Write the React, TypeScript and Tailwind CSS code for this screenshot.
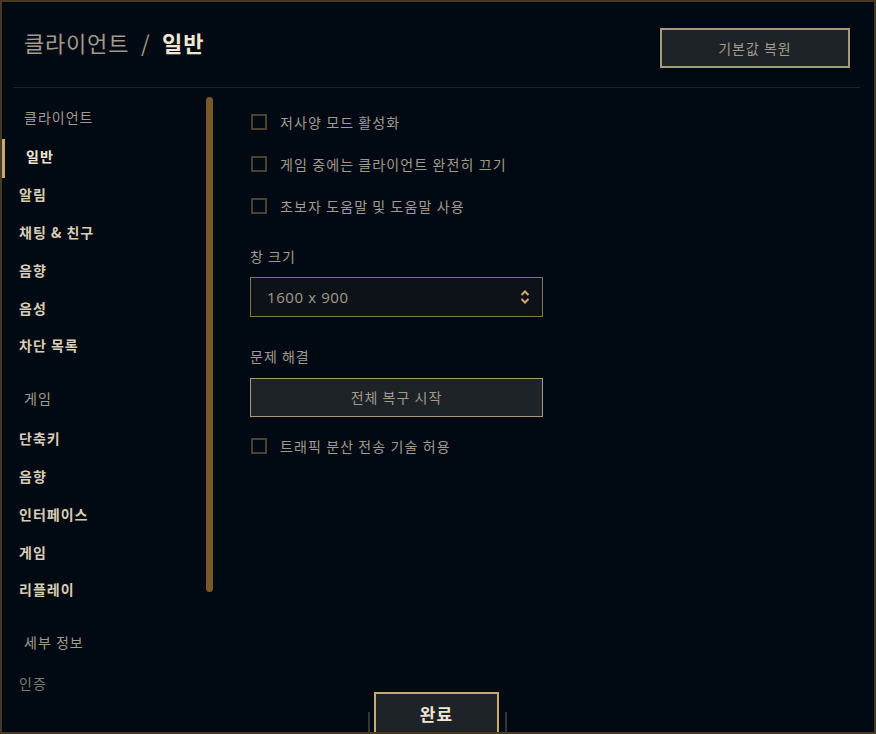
import { useState } from "react";

const font = { fontFamily: '"Noto Sans CJK KR", "Noto Sans", sans-serif' };

interface NavSection {
  title: string;
  items: string[];
}

const sections: NavSection[] = [
  { title: "클라이언트", items: ["일반", "알림", "채팅 & 친구", "음향", "음성", "차단 목록"] },
  { title: "게임", items: ["단축키", "음향", "인터페이스", "게임", "리플레이"] },
  { title: "세부 정보", items: ["인증"] },
];

function Checkbox({ label, checked, onToggle }: { label: string; checked: boolean; onToggle: () => void }) {
  return (
    <button onClick={onToggle} className="flex items-center h-[20px] gap-[13px] text-left">
      <span className="w-[16px] h-[16px] ml-px border-2 border-[#4a4132] flex items-center justify-center">
        {checked && <span className="w-[8px] h-[8px] bg-[#c8aa6e]" />}
      </span>
      <span className="text-[14px] text-[#a09b8c] tracking-[1.1px]">{label}</span>
    </button>
  );
}

export default function App() {
  const [active, setActive] = useState("클라이언트-일반");
  const [checks, setChecks] = useState<Record<string, boolean>>({});

  const toggle = (key: string) => setChecks((prev) => ({ ...prev, [key]: !prev[key] }));

  return (
    <div style={font} className="relative w-[876px] h-[734px] bg-[#010a13] border-2 border-[#463b22] overflow-hidden flex flex-col tracking-[1px]">
      {/* header */}
      <div className="h-[85px] flex items-start justify-between pl-[22px] pr-[24px]">
        <h1 className="mt-[24px] text-[22px] leading-[33px] text-[#a09b8c] tracking-[0.8px]">
          클라이언트 <span className="mx-[6px]">/</span> <span className="font-bold text-[#f0e6d2]">일반</span>
        </h1>
        <button className="mt-[26px] w-[190px] h-[40px] bg-[#1e2328] border-2 border-[#a8997a] text-[14px] text-[#a09b8c]">
          기본값 복원
        </button>
      </div>
      <div className="h-px bg-[#1e2328] ml-[11px] mr-[14px]" />

      <div className="flex flex-1">
        {/* sidebar */}
        <div className="w-[204px] pt-[8px]">
          {sections.map((section, si) => (
            <div key={section.title} className={si > 0 ? "mt-[13px]" : ""}>
              <div className="h-[42px] flex items-center pl-[22px] text-[14px] text-[#a09b8c]">{section.title}</div>
              {section.items.map((item) => {
                const key = `${section.title}-${item}`;
                const isActive = active === key;
                const dim = section.title === "세부 정보";
                return (
                  <button
                    key={key}
                    onClick={() => setActive(key)}
                    className="relative w-full h-[37.8px] flex items-center text-left"
                  >
                    {isActive && <span className="absolute left-0 top-[1px] w-[3px] h-[39px] bg-[#c8aa6e]" />}
                    <span
                      className={
                        isActive
                          ? "pl-[24px] text-[14px] font-bold text-[#f0e6d2]"
                          : dim
                          ? "pl-[17px] pt-[2px] text-[14px] text-[#7e7a6f]"
                          : "pl-[17px] text-[14px] font-bold text-[#d8ceb6]"
                      }
                    >
                      {item}
                    </span>
                  </button>
                );
              })}
            </div>
          ))}
        </div>

        {/* scrollbar */}
        <div className="pt-[9px]">
          <div className="w-[7px] h-[495px] rounded-full bg-[#785a28]" />
        </div>

        {/* content */}
        <div className="flex flex-col pl-[37px] pt-[24px] w-[330px]">
          <div className="flex flex-col gap-[22px]">
            <Checkbox label="저사양 모드 활성화" checked={!!checks.low} onToggle={() => toggle("low")} />
            <Checkbox label="게임 중에는 클라이언트 완전히 끄기" checked={!!checks.close} onToggle={() => toggle("close")} />
            <Checkbox label="초보자 도움말 및 도움말 사용" checked={!!checks.help} onToggle={() => toggle("help")} />
          </div>

          <div className="mt-[30px] h-[20px] flex items-center text-[14px] text-[#a09b8c]">창 크기</div>
          <div className="mt-[11px] w-[293px] h-[40px] bg-[#0d1218] border border-[#857550] flex items-center justify-between pl-[16px] pr-[12px]">
            <span className="text-[15px] tracking-[0.6px] text-[#a09b8c]" style={{ fontFamily: '"Open Sans", "Noto Sans CJK KR", sans-serif' }}>
              1600 x 900
            </span>
            <svg width="10" height="16" viewBox="0 0 10 16" fill="none" stroke="#c8aa6e" strokeWidth="2">
              <path d="M1.5 6 L5 2.5 L8.5 6" />
              <path d="M1.5 10 L5 13.5 L8.5 10" />
            </svg>
          </div>

          <div className="mt-[29px] h-[20px] flex items-center text-[14px] text-[#a09b8c]">문제 해결</div>
          <button className="mt-[12px] w-[293px] h-[39px] bg-[#1e2328] border border-[#a8997a] text-[14px] text-[#a09b8c]">
            전체 복구 시작
          </button>

          <div className="mt-[19px]">
            <Checkbox label="트래픽 분산 전송 기술 허용" checked={!!checks.p2p} onToggle={() => toggle("p2p")} />
          </div>
        </div>
      </div>

      {/* footer button */}
      <div className="absolute left-[366px] bottom-[-2px] w-[2px] h-[22px] bg-[#34363a]" />
      <div className="absolute left-[503px] bottom-[-2px] w-[2px] h-[22px] bg-[#34363a]" />
      <button className="absolute left-[372px] bottom-[-4px] w-[125px] h-[44px] bg-[#1e2328] border-2 border-[#c8aa6e] text-[17px] font-bold text-[#f0e6d2]">
        완료
      </button>
    </div>
  );
}
